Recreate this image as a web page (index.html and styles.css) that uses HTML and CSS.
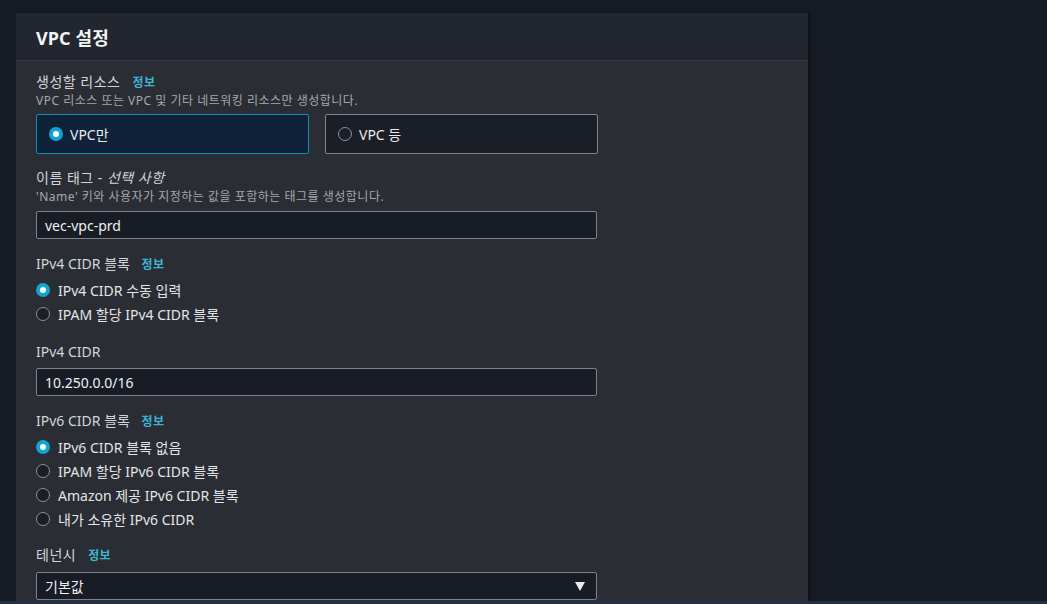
FILE: index.html
```html
<!DOCTYPE html>
<html lang="ko">
<head>
<meta charset="utf-8">
<link rel="stylesheet" href="styles.css">
</head>
<body>
<div class="page">
  <section class="panel">
    <header class="panel-head"><h2>VPC 설정</h2></header>
    <div class="panel-body">
      <div class="field">
        <div class="label ko">생성할 리소스 <a class="info">정보</a></div>
        <div class="desc">VPC 리소스 또는 VPC 및 기타 네트워킹 리소스만 생성합니다.</div>
        <div class="tiles">
          <div class="tile tile-on"><span class="radio radio-on"></span>VPC만</div>
          <div class="tile"><span class="radio"></span>VPC 등</div>
        </div>
      </div>

      <div class="field g14">
        <div class="label ko">이름 태그 - <i>선택 사항</i></div>
        <div class="desc">'Name' 키와 사용자가 지정하는 값을 포함하는 태그를 생성합니다.</div>
        <div class="input m5">vec-vpc-prd</div>
      </div>

      <div class="field g15">
        <div class="label">IPv4 CIDR 블록 <a class="info">정보</a></div>
        <div class="radios">
          <div class="opt"><span class="radio radio-on"></span>IPv4 CIDR 수동 입력</div>
          <div class="opt"><span class="radio"></span>IPAM 할당 IPv4 CIDR 블록</div>
        </div>
      </div>

      <div class="field g16">
        <div class="label">IPv4 CIDR</div>
        <div class="input m6">10.250.0.0/16</div>
      </div>

      <div class="field g15">
        <div class="label">IPv6 CIDR 블록 <a class="info">정보</a></div>
        <div class="radios">
          <div class="opt"><span class="radio radio-on"></span>IPv6 CIDR 블록 없음</div>
          <div class="opt"><span class="radio"></span>IPAM 할당 IPv6 CIDR 블록</div>
          <div class="opt"><span class="radio"></span>Amazon 제공 IPv6 CIDR 블록</div>
          <div class="opt"><span class="radio"></span>내가 소유한 IPv6 CIDR</div>
        </div>
      </div>

      <div class="field g14">
        <div class="label ko">테넌시 <a class="info">정보</a></div>
        <div class="input select m7">기본값<span class="caret"></span></div>
      </div>
    </div>
  </section>
  <div class="bottom-strip"></div>
</div>
</body>
</html>
```

FILE: styles.css
```css
* { box-sizing: border-box; }
html, body { margin: 0; height: 100%; }
body {
  background: #161a22;
  font-family: "Noto Sans", "Open Sans", "Noto Sans CJK KR", sans-serif;
  color: #d5d8dc;
  overflow: hidden;
}
.page {
  position: relative;
  height: 604px;
  padding: 13px 0 0 16px;
}
.panel {
  width: 792px;
  height: 600px;
  background: #2a2d33;
  box-shadow: 2px 0 2px rgba(0,0,0,0.35);
}
.panel-head {
  height: 48px;
  background: #22262f;
  border-bottom: 1px solid #363940;
  padding: 0 20px;
  display: flex;
  align-items: center;
}
.panel-head h2 {
  margin: 0;
  font-size: 18px;
  font-weight: 700;
  color: #f2f3f3;
  letter-spacing: 0.1px;
}
.panel-body {
  padding: 11px 20px 0 20px;
  display: flex;
  flex-direction: column;
}
.field { display: flex; flex-direction: column; }
.g14 { margin-top: 14px; }
.g15 { margin-top: 15px; }
.g16 { margin-top: 16px; }
.label {
  height: 20px;
  font-size: 14px;
  line-height: 20px;
  color: #d1d5db;
  white-space: nowrap;
}
.label.ko { letter-spacing: 0.5px; }
.label i { font-style: italic; }
.info {
  font-size: 12px;
  font-weight: 700;
  letter-spacing: 0.3px;
  color: #3fb5d6;
  margin-left: 8px;
}
.desc {
  height: 18px;
  font-size: 12px;
  line-height: 18px;
  letter-spacing: 0.5px;
  color: #a4a8ae;
  white-space: nowrap;
}
.tiles {
  margin-top: 4px;
  display: flex;
  gap: 16px;
}
.tile {
  width: 273px;
  height: 40px;
  border: 1px solid #80858c;
  border-radius: 2px;
  background: #1a1e26;
  display: flex;
  align-items: center;
  padding-left: 12px;
  font-size: 14px;
  color: #e9ebed;
}
.tile-on {
  border-color: #0c8db0;
  background: #10223a;
}
.tile .radio { margin-right: 7px; }
.radio {
  width: 14px;
  height: 14px;
  border-radius: 50%;
  border: 1.5px solid #8d9198;
  background: #1a1e26;
  flex: none;
  display: inline-block;
}
.radio-on {
  border: 4.5px solid #11a3d1;
  background: #ffffff;
}
.radios { margin-top: 4px; display: flex; flex-direction: column; }
.opt {
  height: 24px;
  display: flex;
  align-items: center;
  font-size: 14px;
  color: #e2e5e8;
  white-space: nowrap;
}
.opt .radio { margin-right: 8px; }
.input {
  width: 561px;
  height: 28px;
  border: 1px solid #7d8289;
  border-radius: 2px;
  background: #171c25;
  display: flex;
  align-items: center;
  padding-left: 8px;
  font-size: 14px;
  color: #eef0f2;
}
.m5 { margin-top: 5px; }
.m6 { margin-top: 6px; }
.m7 { margin-top: 7px; }
.select { position: relative; }
.caret {
  position: absolute;
  right: 11px;
  top: 9px;
  width: 0;
  height: 0;
  border-left: 5.5px solid transparent;
  border-right: 5.5px solid transparent;
  border-top: 9px solid #e9ebed;
}
.bottom-strip {
  position: absolute;
  left: 0;
  right: 0;
  bottom: 0;
  height: 3px;
  background: #243042;
}
```
